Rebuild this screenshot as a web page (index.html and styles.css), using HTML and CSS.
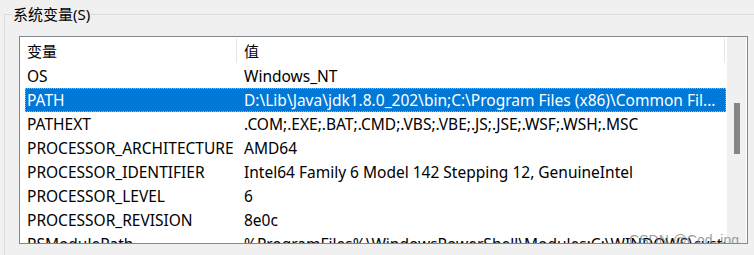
FILE: index.html
```html
<!DOCTYPE html>
<html lang="zh-CN">
<head>
    <meta charset="UTF-8">
    <title>系统变量</title>
    <link rel="stylesheet" href="styles.css">
</head>
<body>
    <div class="grupo">
        <span class="grupo-titulo">系统变量(S)</span>

        <div class="lista">
            <div class="lista-corpo">
                <div class="cabecalho">
                    <div class="col col-nome">变量</div>
                    <div class="col col-valor">值</div>
                </div>
                <div class="linha"><div class="col col-nome">OS</div><div class="col col-valor">Windows_NT</div></div>
                <div class="linha selecionada"><div class="col col-nome">PATH</div><div class="col col-valor">D:\Lib\Java\jdk1.8.0_202\bin;C:\Program Files (x86)\Common Fil...</div></div>
                <div class="linha"><div class="col col-nome">PATHEXT</div><div class="col col-valor">.COM;.EXE;.BAT;.CMD;.VBS;.VBE;.JS;.JSE;.WSF;.WSH;.MSC</div></div>
                <div class="linha"><div class="col col-nome">PROCESSOR_ARCHITECTURE</div><div class="col col-valor">AMD64</div></div>
                <div class="linha"><div class="col col-nome">PROCESSOR_IDENTIFIER</div><div class="col col-valor">Intel64 Family 6 Model 142 Stepping 12, GenuineIntel</div></div>
                <div class="linha"><div class="col col-nome">PROCESSOR_LEVEL</div><div class="col col-valor">6</div></div>
                <div class="linha"><div class="col col-nome">PROCESSOR_REVISION</div><div class="col col-valor">8e0c</div></div>
                <div class="linha"><div class="col col-nome">PSModulePath</div><div class="col col-valor">%ProgramFiles%\WindowsPowerShell\Modules;C:\WINDOWS\system32\...</div></div>
            </div>
            <div class="rolagem">
                <div class="rolagem-barra"></div>
            </div>
            <span class="marca">CSDN @Cod_ing</span>
        </div>
    </div>
</body>
</html>
```
FILE: styles.css
```css
body {
    margin: 0;
    background: #f0f0f0;
    font-family: "Segoe UI", "Noto Sans", "Noto Sans CJK SC", sans-serif;
    font-size: 15.5px;
    color: #000;
    height: 255px;
    overflow: hidden;
}

.grupo {
    position: relative;
    margin: 14px 0 0 4px;
    border-top: 1px solid #dcdcdc;
    border-left: 1px solid #dcdcdc;
    height: 240px;
}

.grupo-titulo {
    position: absolute;
    left: 7px;
    top: -11px;
    padding: 0 1px;
    background: #f0f0f0;
    font-size: 15px;
    line-height: 20px;
}

.lista {
    position: relative;
    display: flex;
    margin: 21px 0 0 14px;
    width: 727px;
    height: 206px;
    border: 1px solid #828790;
    background: #fff;
    overflow: hidden;
}

.lista-corpo {
    width: 701px;
    padding-left: 5px;
    overflow: hidden;
}

.cabecalho {
    display: flex;
    height: 27px;
}

.cabecalho .col {
    border-right: 1px solid #e5e5e5;
    margin-top: 1px;
    height: 25px;
    line-height: 26px;
    font-size: 15px;
}

.linha {
    display: flex;
    height: 24px;
    line-height: 24px;
}

.col {
    white-space: nowrap;
    overflow: hidden;
    box-sizing: border-box;
}

.col-nome {
    width: 212px;
    padding-left: 2px;
    flex-shrink: 0;
}

.col-valor {
    width: 488px;
    padding-left: 7px;
}

.linha.selecionada {
    background: #0078d7;
    color: #fff;
    outline: 1px dotted #ff9a2e;
    outline-offset: -1px;
}

.rolagem {
    width: 20px;
    background: #f0f0f0;
    border-left: 1px solid #fff;
    box-sizing: border-box;
    padding-top: 66px;
}

.rolagem-barra {
    width: 6px;
    height: 51px;
    margin-left: 7px;
    background: #858585;
}

.marca {
    position: absolute;
    right: 8px;
    bottom: -5px;
    font-family: "Liberation Sans", sans-serif;
    font-size: 14px;
    color: rgba(120, 120, 120, 0.75);
}
```
